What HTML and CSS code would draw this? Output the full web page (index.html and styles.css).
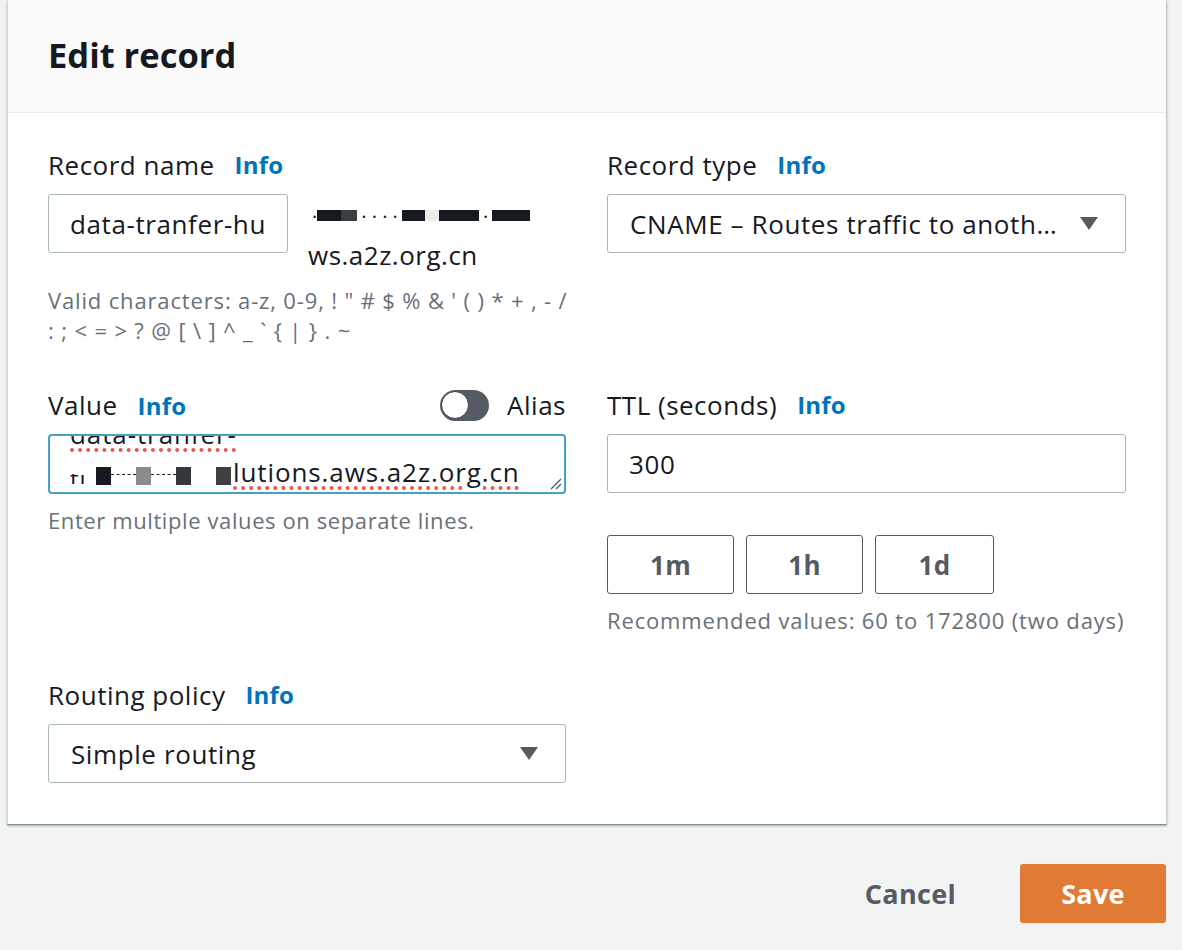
FILE: index.html
```html
<!DOCTYPE html>
<html lang="en">
<head>
<meta charset="utf-8">
<title>Edit record</title>
<link rel="stylesheet" href="styles.css">
</head>
<body>
<div class="page">
  <div class="modal">
    <div class="modal-header">
      <h2 class="title">Edit record</h2>
    </div>
    <div class="modal-body">
      <div class="field">
        <div class="label-row"><span class="label">Record name</span><a class="info">Info</a></div>
        <div class="name-row">
          <div class="input name-input">data-tranfer-hu</div>
          <div class="suffix">
            <div class="suffix-line redacted-line">
              <span class="dot">.</span><span class="blk b-dark w24"></span><span class="blk b-mid w16"></span><span class="dots">. . . .</span><span class="blk b-dark w23"></span><span class="blk b-light w14"></span><span class="blk b-dark w40"></span><span class="dots">.</span><span class="blk b-dark w38"></span>
            </div>
            <div class="suffix-line">ws.a2z.org.cn</div>
          </div>
        </div>
        <div class="hint hint-wide">Valid characters: a-z, 0-9, ! " # $ % &amp; ' ( ) * + , - /<br>: ; &lt; = &gt; ? @ [ \ ] ^ _ ` { | } . ~</div>
      </div>

      <div class="field">
        <div class="label-row"><span class="label">Record type</span><a class="info">Info</a></div>
        <div class="select">
          <span class="select-text">CNAME – Routes traffic to anoth…</span>
          <svg class="caret" width="18" height="13" viewBox="0 0 18 13"><path d="M0 0 H18 L9 13 Z" fill="#545b64"/></svg>
        </div>
      </div>

      <div class="field">
        <div class="label-row spread">
          <div><span class="label">Value</span><a class="info">Info</a></div>
          <div class="toggle-wrap"><span class="toggle"><span class="knob"></span></span><span class="label">Alias</span></div>
        </div>
        <div class="textarea">
          <div class="ta-content">
            <div class="ta-line"><span class="spell">data-tranfer-</span></div>
            <div class="ta-line"><span class="ti">ti</span><span class="sq sq-black"></span><span class="dash"></span><span class="sq sq-gray"></span><span class="dash"></span><span class="sq sq-dark"></span><span class="gap"></span><span class="sq sq-dark2"></span><span class="spell">lutions.aws.a2z.org.cn</span></div>
          </div>
          <span class="border-patch"></span>
          <svg class="grip" width="14" height="14" viewBox="0 0 14 14"><path d="M13 3 L3 13 M13 8 L8 13" stroke="#545b64" stroke-width="1.4" fill="none"/></svg>
        </div>
        <div class="hint hint-gap">Enter multiple values on separate lines.</div>
      </div>

      <div class="field">
        <div class="label-row"><span class="label">TTL (seconds)</span><a class="info">Info</a></div>
        <div class="input">300</div>
        <div class="ttl-buttons">
          <button class="ttl-btn w1m">1m</button>
          <button class="ttl-btn w1h">1h</button>
          <button class="ttl-btn w1d">1d</button>
        </div>
        <div class="hint hint-gap hint-wide">Recommended values: 60 to 172800 (two days)</div>
      </div>

      <div class="field">
        <div class="label-row"><span class="label">Routing policy</span><a class="info">Info</a></div>
        <div class="select">
          <span class="select-text">Simple routing</span>
          <svg class="caret" width="18" height="13" viewBox="0 0 18 13"><path d="M0 0 H18 L9 13 Z" fill="#545b64"/></svg>
        </div>
      </div>
    </div>
  </div>

  <div class="footer">
    <button class="btn-link">Cancel</button>
    <button class="btn-primary">Save</button>
  </div>
</div>
</body>
</html>
```

FILE: styles.css
```css
* { box-sizing: border-box; }

html, body {
  margin: 0;
  padding: 0;
  background: #f2f3f3;
}

body {
  font-family: "Open Sans", "Noto Sans", sans-serif;
  color: #16191f;
  width: 1182px;
  height: 950px;
  overflow: hidden;
}

.page {
  padding-left: 7px;
  width: 1167px;
}

.modal {
  background: #fff;
  border-left: 1px solid #d5dbdb;
  border-right: 1px solid #c6cccc;
  box-shadow: 0 2px 2px rgba(0, 28, 36, 0.35), 0 1px 0 rgba(0, 28, 36, 0.2);
}

.modal-header {
  height: 113px;
  background: #fafafa;
  border-bottom: 1px solid #eaeded;
  padding: 33px 40px 0;
}

.title {
  margin: 0;
  font-size: 34.5px;
  line-height: 44px;
  font-weight: 700;
  letter-spacing: 0;
  color: #16191f;
}

.modal-body {
  display: grid;
  grid-template-columns: 518px 519px;
  column-gap: 41px;
  row-gap: 45px;
  align-items: start;
  padding: 37px 39px 41px 40px;
}

.label-row {
  display: flex;
  align-items: center;
  height: 30px;
  margin-bottom: 14px;
}

.label-row.spread {
  justify-content: space-between;
}

.label {
  font-size: 26px;
  line-height: 30px;
  color: #16191f;
  letter-spacing: 0.5px;
}

.info {
  margin-left: 20px;
  font-size: 24px;
  font-weight: 700;
  color: #0073bb;
  line-height: 30px;
  letter-spacing: 0.2px;
}

.input {
  height: 59px;
  border: 1px solid #aab7b8;
  border-radius: 3px;
  padding: 0 21px;
  display: flex;
  align-items: center;
  font-size: 26px;
  color: #16191f;
  letter-spacing: 0.6px;
  background: #fff;
}

.name-row {
  display: flex;
  align-items: flex-start;
  gap: 20px;
}

.name-input {
  width: 240px;
  flex: none;
  overflow: hidden;
  white-space: nowrap;
}

.suffix {
  padding-top: 1px;
}

.suffix-line {
  font-size: 26px;
  line-height: 40px;
  letter-spacing: 0.5px;
  height: 40px;
}

.redacted-line {
  display: flex;
  align-items: center;
  padding-left: 4px;
}

.dot, .dots {
  font-size: 20px;
  line-height: 20px;
  color: #16191f;
  letter-spacing: 0;
  white-space: pre;
  align-self: flex-end;
  margin-bottom: 14px;
}

.dots { margin: 0 4px 14px; }

.blk {
  display: inline-block;
  height: 11px;
}
.b-dark { background: #16191f; }
.b-mid { background: #3b3f45; }
.b-light { background: #ececec; }
.w14 { width: 14px; }
.w16 { width: 16px; }
.w23 { width: 23px; }
.w24 { width: 24px; }
.w38 { width: 38px; }
.w40 { width: 40px; }

.hint {
  font-size: 22px;
  line-height: 30px;
  color: #687078;
  margin-top: 10px;
  letter-spacing: 0.6px;
  white-space: nowrap;
}

.hint-wide { letter-spacing: 0.85px; }

.hint-gap { margin-top: 11px; }

.select {
  height: 59px;
  border: 1px solid #aab7b8;
  border-radius: 3px;
  padding: 0 27px 0 22px;
  display: flex;
  align-items: center;
  justify-content: space-between;
  font-size: 26px;
  letter-spacing: 0.6px;
  background: #fff;
}

.select-text {
  white-space: nowrap;
}

.caret { flex: none; }

.toggle-wrap {
  display: flex;
  align-items: center;
  gap: 18px;
}

.toggle {
  width: 49px;
  height: 31px;
  border-radius: 16px;
  background: #545b64;
  display: flex;
  align-items: center;
  padding-left: 1px;
}

.knob {
  width: 28px;
  height: 28px;
  border-radius: 50%;
  background: #fff;
  border: 1px solid #3a3f45;
}

.textarea {
  position: relative;
  height: 60px;
  border: 2px solid #44a1c9;
  border-radius: 4px;
  overflow: hidden;
  background: #fff;
}

.ta-content {
  margin-top: -21px;
  padding-left: 20px;
}

.ta-line {
  font-size: 26px;
  line-height: 38px;
  height: 38px;
  letter-spacing: 0.9px;
  white-space: nowrap;
  display: flex;
  align-items: center;
}

.spell {
  text-decoration: underline dotted #e8584f;
  text-decoration-thickness: 4px;
  text-underline-offset: 4px;
}

.ti {
  display: inline-block;
  width: 26px;
  height: 10px;
  overflow: hidden;
  line-height: 10px;
  font-size: 24px;
  margin-top: 14px;
  color: #16191f;
}

.sq {
  display: inline-block;
  width: 15px;
  height: 18px;
  margin-top: 8px;
}
.sq-black { background: #16191f; }
.sq-gray { background: #8a8b8d; }
.sq-dark { background: #34373b; }
.sq-dark2 { background: #3d4045; margin-right: 2px; }

.dash {
  display: inline-block;
  width: 25px;
  height: 0;
  border-top: 1.5px dashed #16191f;
  margin-top: 4px;
}

.gap { display: inline-block; width: 25px; }

.border-patch {
  position: absolute;
  left: 3px;
  bottom: -2px;
  width: 181px;
  height: 3px;
  background: #fff;
}

.grip {
  position: absolute;
  right: 2px;
  bottom: 2px;
}

.ttl-buttons {
  display: flex;
  gap: 12px;
  margin-top: 42px;
}

.ttl-btn {
  height: 59px;
  border: 1px solid #545b64;
  border-radius: 3px;
  background: #fff;
  font-family: inherit;
  font-size: 26px;
  font-weight: 700;
  color: #545b64;
  letter-spacing: 0.3px;
  padding: 0;
}

.w1m { width: 127px; }
.w1h { width: 117px; }
.w1d { width: 119px; }

.footer {
  display: flex;
  justify-content: flex-end;
  align-items: center;
  gap: 32px;
  margin-top: 40px;
  padding-right: 1px;
}

.btn-link {
  border: none;
  background: transparent;
  font-family: inherit;
  font-size: 27px;
  font-weight: 700;
  color: #545b64;
  letter-spacing: 0.3px;
  padding: 0 32px;
  height: 59px;
}

.btn-primary {
  width: 146px;
  height: 59px;
  border: none;
  border-radius: 3px;
  background: #e07a34;
  color: #fff;
  font-family: inherit;
  font-size: 27px;
  font-weight: 700;
  letter-spacing: 0.3px;
}
```
